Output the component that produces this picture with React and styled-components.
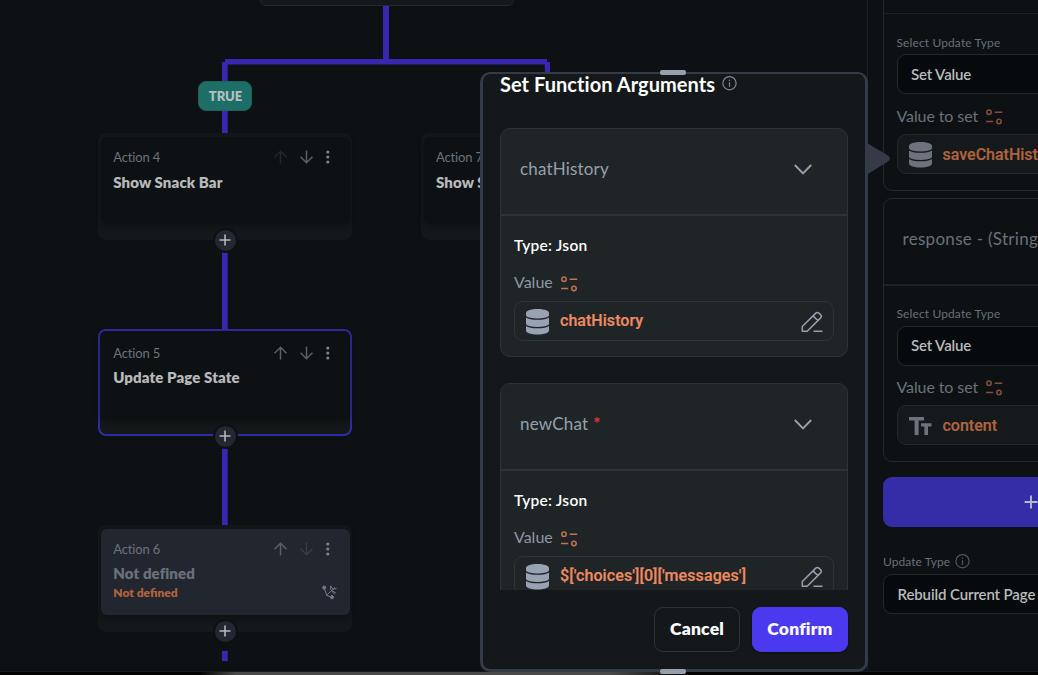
import React from 'react';
import styled, { createGlobalStyle, css } from 'styled-components';

const GlobalStyle = createGlobalStyle`
  * { box-sizing: border-box; }
  body { margin: 0; background: #0d1113; }
`;

const Screen = styled.div`
  position: relative;
  display: flex;
  flex-direction: column;
  width: 1038px;
  height: 675px;
  overflow: hidden;
  background: #0d1113;
  font-family: Lato, "Open Sans", sans-serif;
`;

const Workspace = styled.div`
  display: flex;
  height: 671px;
`;

const BottomStrip = styled.div`
  height: 4px;
  border-top: 1px solid #171b1e;
  background: linear-gradient(90deg, #030304 0, #030304 200px, #4b4a4b 236px, #4b4a4b 610px, #030304 690px, #030304 100%);
`;

const Text = styled.span`
  padding-bottom: ${p => p.$lift || 0}px;
  font-size: ${p => p.$size}px;
  font-weight: ${p => p.$weight || 400};
  color: ${p => p.$color};
  letter-spacing: ${p => p.$ls || 0}px;
  line-height: 20px;
  white-space: nowrap;
`;

/* ---------- flow canvas ---------- */

const Canvas = styled.div`
  position: relative;
  flex: 0 0 868px;
  overflow: hidden;
  border-right: 1px solid #1c2125;
`;

const Wires = styled.svg`
  position: absolute;
  inset: 0;
`;

const PreviousNode = styled.div`
  position: absolute;
  left: 259.5px;
  top: -40px;
  width: 254.5px;
  height: 46px;
  border: 1px solid #22282c;
  border-radius: 6px;
  background: #14181a;
`;

const Branch = styled.div`
  position: absolute;
  left: 198px;
  top: 81px;
  width: 54px;
  height: 30px;
  display: flex;
  align-items: center;
  justify-content: center;
  padding-left: 1px;
  border-radius: 8px;
  background: #1c6e66;
  border: 1px solid #1f6059;
`;

const Node = styled.div`
  position: absolute;
  left: ${p => p.$x}px;
  top: ${p => p.$y}px;
  width: 254px;
  height: 107px;
  padding: ${p => (p.$selected ? '0' : '4px 2px 0 3px')};
  border-radius: 8px;
  background: #14181a;
  ${p => p.$selected && css`border: 2px solid #322ca3;`}
`;

const NodeCard = styled.div`
  height: ${p => (p.$selected ? 88 : 86)}px;
  padding: ${p => (p.$selected ? 12 : 10)}px 20.5px 0 ${p => (p.$selected ? 13.3 : 12.3)}px;
  border-radius: 6px;
  background: ${p => (p.$filled ? '#22262e' : '#0d1113')};
  box-shadow: 0 3px 6px rgba(5, 8, 9, 0.45);
`;

const NodeTop = styled.div`
  display: flex;
  align-items: center;
  justify-content: space-between;
  height: 20px;
`;

const NodeTools = styled.div`
  display: flex;
  align-items: center;
  gap: 12px;
`;

const NodeTitle = styled.div`
  display: flex;
  height: 20px;
  margin-top: ${p => p.$mt}px;
`;

const NodeFoot = styled.div`
  display: flex;
  justify-content: space-between;
  align-items: center;
  height: 20px;
  margin-right: -7px;
`;

const FootIcon = styled.span`
  display: flex;
  padding-bottom: 2px;
`;

const AddDot = styled.div`
  position: absolute;
  left: 212.7px;
  top: ${p => p.$y}px;
  width: 25px;
  height: 25px;
  display: grid;
  place-items: center;
  border: 2px solid #0d1113;
  border-radius: 50%;
  background: #23272f;
`;

const ArrowUp = ({ dim }) => (
  <svg width="14" height="14" viewBox="0 0 14 14" fill="none" stroke={dim ? '#23282b' : '#586068'} strokeWidth="1.5">
    <path d="M6.5 13.5V1.5M.5 7.2L6.5 1.2L12.5 7.2" />
  </svg>
);

const ArrowDown = ({ dim }) => (
  <svg width="14" height="14" viewBox="0 0 14 14" fill="none" stroke={dim ? '#363c44' : '#586068'} strokeWidth="1.5">
    <path d="M6.5 .5V12.5M.5 6.8L6.5 12.8L12.5 6.8" />
  </svg>
);

const Dots = () => (
  <svg width="4" height="14" viewBox="0 0 4 14" fill="#7d848b">
    <circle cx="1.8" cy="2" r="1.6" />
    <circle cx="1.8" cy="7" r="1.6" />
    <circle cx="1.8" cy="12" r="1.6" />
  </svg>
);

const Plus = ({ size, color }) => (
  <svg width={size} height={size} viewBox="0 0 12 12" stroke={color} strokeWidth="1.6" fill="none">
    <path d="M6 .5V11.5M.5 6H11.5" />
  </svg>
);

const RouteIcon = () => (
  <svg width="15" height="15" viewBox="0 0 15 15" fill="none" stroke="#717982" strokeWidth="1">
    <circle cx="2.2" cy="2.6" r="1.6" fill="#717982" />
    <circle cx="10" cy="12.2" r="1.6" fill="#717982" />
    <path d="M2.6 4L4.8 10.5L10 12.2M4.2 10.6L13 2.4M8.6 .8V4.2L12.4 9M8.6 1L11 4.2L14.6 3.4M10.4 5.8L14 8.2" />
  </svg>
);

const ActionNode = ({ x = 98, y, label, title, upDim, downDim, selected, undefinedAction }) => (
  <Node $x={x} $y={y} $selected={selected}>
    <NodeCard $selected={selected} $filled={undefinedAction}>
      <NodeTop>
        <Text $size={13} $ls={-0.15} $color="#6b737b">{label}</Text>
        <NodeTools>
          <ArrowUp dim={upDim} />
          <ArrowDown dim={downDim} />
          <Dots />
        </NodeTools>
      </NodeTop>
      <NodeTitle $mt={selected ? 4 : undefinedAction ? 4.5 : 5}>
        <Text $size={15} $weight={800} $ls={0.1} $color={undefinedAction ? '#69717a' : '#b7b9ba'}>{title}</Text>
      </NodeTitle>
      {undefinedAction && (
        <NodeFoot>
          <Text $size={12} $weight={800} $color="#b0633f">Not defined</Text>
          <FootIcon><RouteIcon /></FootIcon>
        </NodeFoot>
      )}
    </NodeCard>
  </Node>
);

/* ---------- shared icons ---------- */

const Variable = ({ color = '#b3694a' }) => (
  <svg width="17" height="16" viewBox="0 0 17 16" fill="none" stroke={color} strokeWidth="1.5">
    <circle cx="3" cy="3.3" r="2.2" />
    <path d="M8.7 3.3H16.2M0 12.5H7.2" />
    <circle cx="13" cy="12.5" r="2.2" />
  </svg>
);

const Database = ({ color, gap }) => (
  <svg width="23" height="26" viewBox="0 0 23 26">
    <path d="M0 4C0 1.6 5 0 11.5 0S23 1.6 23 4V21.6C23 24 18 25.6 11.5 25.6S0 24 0 21.6Z" fill={color} />
    <path d="M-.5 7.2C1.5 9.4 6 10.2 11.5 10.2S21.5 9.4 23.5 7.2M-.5 15.7C1.5 17.9 6 18.7 11.5 18.7S21.5 17.9 23.5 15.7" fill="none" stroke={gap} strokeWidth="1.2" />
  </svg>
);

const Pencil = () => (
  <svg width="22" height="22" viewBox="0 0 22 22" fill="none" stroke="#95a1ac" strokeWidth="1.5" strokeLinejoin="round">
    <path d="M1.3 20.2V15.5L14.8 2.1C15.7 1.3 17 1.3 17.9 2.1L19.6 3.8C20.5 4.7 20.5 6 19.6 6.9L6.2 20.2ZM12 4.9L17 9.7M12.5 20.2H21.5" />
  </svg>
);

const Chevron = () => (
  <svg width="18" height="13" viewBox="0 0 18 13" fill="none" stroke="#95a1ac" strokeWidth="1.9">
    <path d="M.8 3L9 11.3L17.2 3" />
  </svg>
);

const Info = ({ color }) => (
  <svg width="15" height="17" viewBox="0 0 15 17" fill="none" stroke={color} strokeWidth="1.2">
    <circle cx="7.5" cy="7.2" r="6.6" />
    <path d="M7.5 6.2V10.7M7.5 3.7V4.9" />
  </svg>
);

const TextType = () => (
  <svg width="23" height="18" viewBox="0 0 23 18" fill="#6c737d">
    <path d="M0 0H15V3.6H9.6V18H5.6V3.6H0ZM12 6.3H22.5V9.6H19V18H15.4V9.6H12Z" />
  </svg>
);

/* ---------- side panel ---------- */

const Panel = styled.aside`
  flex: 1;
  display: flex;
  flex-direction: column;
  padding-left: 15px;
  overflow: hidden;
`;

const PanelCard = styled.section`
  flex: none;
  width: 300px;
  height: ${p => p.$h}px;
  margin-top: ${p => p.$mt}px;
  border: 1px solid #24292d;
  border-radius: 9px;
`;

const PanelCardHead = styled.div`
  display: flex;
  align-items: center;
  height: ${p => p.$h}px;
  padding: 0 0 4px 18.5px;
  border-bottom: ${p => p.$line || 2}px solid #1d2226;
`;

const PanelCardBody = styled.div`
  display: flex;
  flex-direction: column;
  padding: ${p => p.$pt}px 0 0 12.5px;
`;

const FieldLabel = styled.div`
  flex: none;
  display: flex;
  align-items: center;
  gap: 4.5px;
  height: 20px;
  margin-top: ${p => p.$mt || 0}px;
`;

const SelectBox = styled.div`
  flex: none;
  display: flex;
  align-items: center;
  width: 280px;
  height: 40px;
  margin-top: ${p => p.$mt}px;
  padding-left: 13.5px;
  border: 1px solid #24292e;
  border-radius: 9px;
  background: #070a0c;
`;

const VariableBox = styled.div`
  flex: none;
  display: flex;
  align-items: center;
  width: ${p => (p.$wide ? 280 : 320)}px;
  height: 40px;
  padding: 0 ${p => (p.$wide ? 0 : 10)}px 0 11px;
  border: ${p => (p.$wide ? '1px solid #23282c' : '1.5px solid #2d343e')};
  border-radius: 9px;
  background: ${p => (p.$wide ? '#15191b' : '#1f2427')};

  svg { margin-top: 2px; }
`;

const VarName = styled.span`
  margin: ${p => (p.$dim ? 2 : 0)}px auto 0 11px;
  font: 500 16px/20px Roboto, "Liberation Sans", sans-serif;
  -webkit-text-stroke: 0.2px currentColor;
  letter-spacing: ${p => p.$ls || 0}px;
  white-space: nowrap;
  color: ${p => (p.$dim ? '#b0643f' : '#ee8b60')};
`;

const AddField = styled.div`
  flex: none;
  display: flex;
  align-items: center;
  width: 300px;
  height: 50px;
  margin-top: 15.5px;
  padding-left: 140.5px;
  border-radius: 9px;
  background: #342da7;
`;

const ValueRow = styled.div`
  display: flex;
  align-items: center;
  gap: 8px;
  height: 20px;
  margin: ${p => p.$mt}px 0 ${p => p.$mb}px;

  svg { margin-top: ${p => p.$iconDrop || 0}px; }
`;

const SetValueFields = ({ lift, children }) => (
  <>
    <FieldLabel><Text $size={12} $ls={0.12} $color="#687078">Select Update Type</Text></FieldLabel>
    <SelectBox $mt={1.5}><Text $size={15} $weight={600} $ls={-0.15} $lift={lift} $color="#b9bbbc">Set Value</Text></SelectBox>
    <ValueRow $mt={12.5} $mb={7}>
      <Text $size={16} $ls={-0.1} $lift={2} $color="#69717a">Value to set</Text>
      <Variable color="#83513a" />
    </ValueRow>
    {children}
  </>
);

/* ---------- dialog ---------- */

const Dialog = styled.div`
  position: absolute;
  left: 480px;
  top: 71.5px;
  width: 388px;
  height: 600px;
  display: flex;
  flex-direction: column;
  padding: 0 17px;
  border: 2px solid #323b47;
  border-width: 2px 3px 3px;
  border-radius: 10px;
  background: #14181b;
`;

const Scroll = styled.div`
  height: 516px;
  overflow: hidden;
`;

const DialogTitle = styled.div`
  display: flex;
  align-items: center;
  gap: 7px;
  height: 54px;
  padding-bottom: 33px;
`;

const Argument = styled.section`
  height: 229px;
  margin-bottom: 26px;
  border: 1.5px solid #2b333b;
  border-radius: 10px;
  background: #1f2427;
`;

const ArgumentHead = styled.div`
  display: flex;
  align-items: center;
  justify-content: space-between;
  height: 87px;
  padding: 0 35px 5px 19px;
  border-bottom: 2px solid #2b343d;
`;

const ArgumentBody = styled.div`
  display: flex;
  flex-direction: column;
  padding: 20px 0 0 13px;
`;

const Required = styled.span`
  margin-left: 1px;
  color: #e0363b;
  font: 700 17px/20px Lato, sans-serif;
`;

const Actions = styled.div`
  display: flex;
  justify-content: flex-end;
  gap: 12px;
  padding-top: 17.5px;
`;

const Button = styled.button`
  width: ${p => (p.$primary ? 96 : 86)}px;
  height: 45px;
  padding: 0 0 2px;
  border: 1px solid ${p => (p.$primary ? '#4b39ef' : '#2b343d')};
  border-radius: 9px;
  background: ${p => (p.$primary ? '#4b39ef' : 'transparent')};
  color: #fff;
  font: 800 17.5px Lato, sans-serif;
  letter-spacing: 0.2px;
  box-shadow: ${p => (p.$primary ? '0 1px 2px rgba(0,0,0,.5)' : 'none')};
`;

const Handle = styled.div`
  position: absolute;
  left: 660px;
  top: ${p => p.$y}px;
  width: 25.5px;
  height: 5px;
  border-radius: 2px;
  background: #95a1ac;
`;

const Pointer = styled.svg`
  position: absolute;
  left: 867px;
  top: 142px;
`;

const ArgumentCard = ({ name, required, value, ls }) => (
  <Argument>
    <ArgumentHead>
      <span>
        <Text $size={17} $ls={0.17} $color="#95a1ac">{name}</Text>
        {required && <Required> *</Required>}
      </span>
      <Chevron />
    </ArgumentHead>
    <ArgumentBody>
      <FieldLabel><Text $size={15.5} $weight={600} $ls={0.25} $lift={2} $color="#fff">Type: Json</Text></FieldLabel>
      <ValueRow $mt={17} $mb={8} $iconDrop={2}>
        <Text $size={16} $lift={2} $color="#8d98a3">Value</Text>
        <Variable color="#c27250" />
      </ValueRow>
      <VariableBox>
        <Database color="#98a2b3" gap="#1f2427" />
        <VarName $ls={ls}>{value}</VarName>
        <Pencil />
      </VariableBox>
    </ArgumentBody>
  </Argument>
);

export default function App() {
  return (
    <Screen>
      <GlobalStyle />
      <Workspace>
        <Canvas>
          <Wires width="868" height="671" fill="#3828b0">
            <path d="M383 6H389V59H547V62H550V74H544.8V64.5H227.7V134H222V62H225V59H383Z" />
            <path d="M222 240H227.7V329H222ZM222 436H227.7V525H222ZM222 651H227.7V661H222Z" />
          </Wires>
          <PreviousNode />
          <Branch><Text $size={13} $weight={800} $color="#b6bfbd">TRUE</Text></Branch>
          <ActionNode y={133} label="Action 4" title="Show Snack Bar" upDim />
          <ActionNode x={420.7} y={133} label="Action 7" title="Show Snack Bar" upDim />
          <ActionNode y={329} label="Action 5" title="Update Page State" selected />
          <ActionNode y={524.5} label="Action 6" title="Not defined" downDim undefinedAction />
          <AddDot $y={227.5}><Plus size={12} color="#b5b7b9" /></AddDot>
          <AddDot $y={423.5}><Plus size={12} color="#b5b7b9" /></AddDot>
          <AddDot $y={618.7}><Plus size={12} color="#b5b7b9" /></AddDot>
        </Canvas>
        <Panel>
          <PanelCard $h={291} $mt={-100.5}>
            <PanelCardHead $h={113.5} $line={1} />
            <PanelCardBody $pt={18.5}>
              <SetValueFields lift={0.5}>
                <VariableBox $wide>
                  <Database color="#6c737d" gap="#15191b" />
                  <VarName $dim>saveChatHistory</VarName>
                </VariableBox>
              </SetValueFields>
            </PanelCardBody>
          </PanelCard>
          <PanelCard $h={263.5} $mt={7.5}>
            <PanelCardHead $h={87}>
              <Text $size={17} $ls={0.3} $lift={1} $color="#69717a">response - (String)</Text>
            </PanelCardHead>
            <PanelCardBody $pt={18}>
              <SetValueFields lift={2}>
                <VariableBox $wide>
                  <TextType />
                  <VarName $dim>content</VarName>
                </VariableBox>
              </SetValueFields>
            </PanelCardBody>
          </PanelCard>
          <AddField><Plus size={14} color="#b7b7cf" /></AddField>
          <FieldLabel $mt={25}>
            <Text $size={12} $ls={0.05} $color="#687078">Update Type</Text>
            <Info color="#50575e" />
          </FieldLabel>
          <SelectBox $mt={2}><Text $size={15} $weight={600} $ls={-0.12} $lift={1} $color="#b9bbbc">Rebuild Current Page</Text></SelectBox>
        </Panel>
      </Workspace>
      <BottomStrip />
      <Pointer width="24" height="34" viewBox="0 0 24 34" fill="#323b47">
        <path d="M0 1L21 13.5Q25 16.5 21 19.5L0 32.5Z" />
      </Pointer>
      <Dialog>
        <Scroll>
          <DialogTitle>
            <Text $size={20} $weight={700} $ls={0.05} $lift={1} $color="#fff">Set Function Arguments</Text>
            <Info color="#7d8791" />
          </DialogTitle>
          <ArgumentCard name="chatHistory" value="chatHistory" ls={0.04} />
          <ArgumentCard name="newChat" required value="$['choices'][0]['messages']" ls={0.1} />
        </Scroll>
        <Actions>
          <Button>Cancel</Button>
          <Button $primary>Confirm</Button>
        </Actions>
      </Dialog>
      <Handle $y={70} />
      <Handle $y={668.5} />
    </Screen>
  );
}
